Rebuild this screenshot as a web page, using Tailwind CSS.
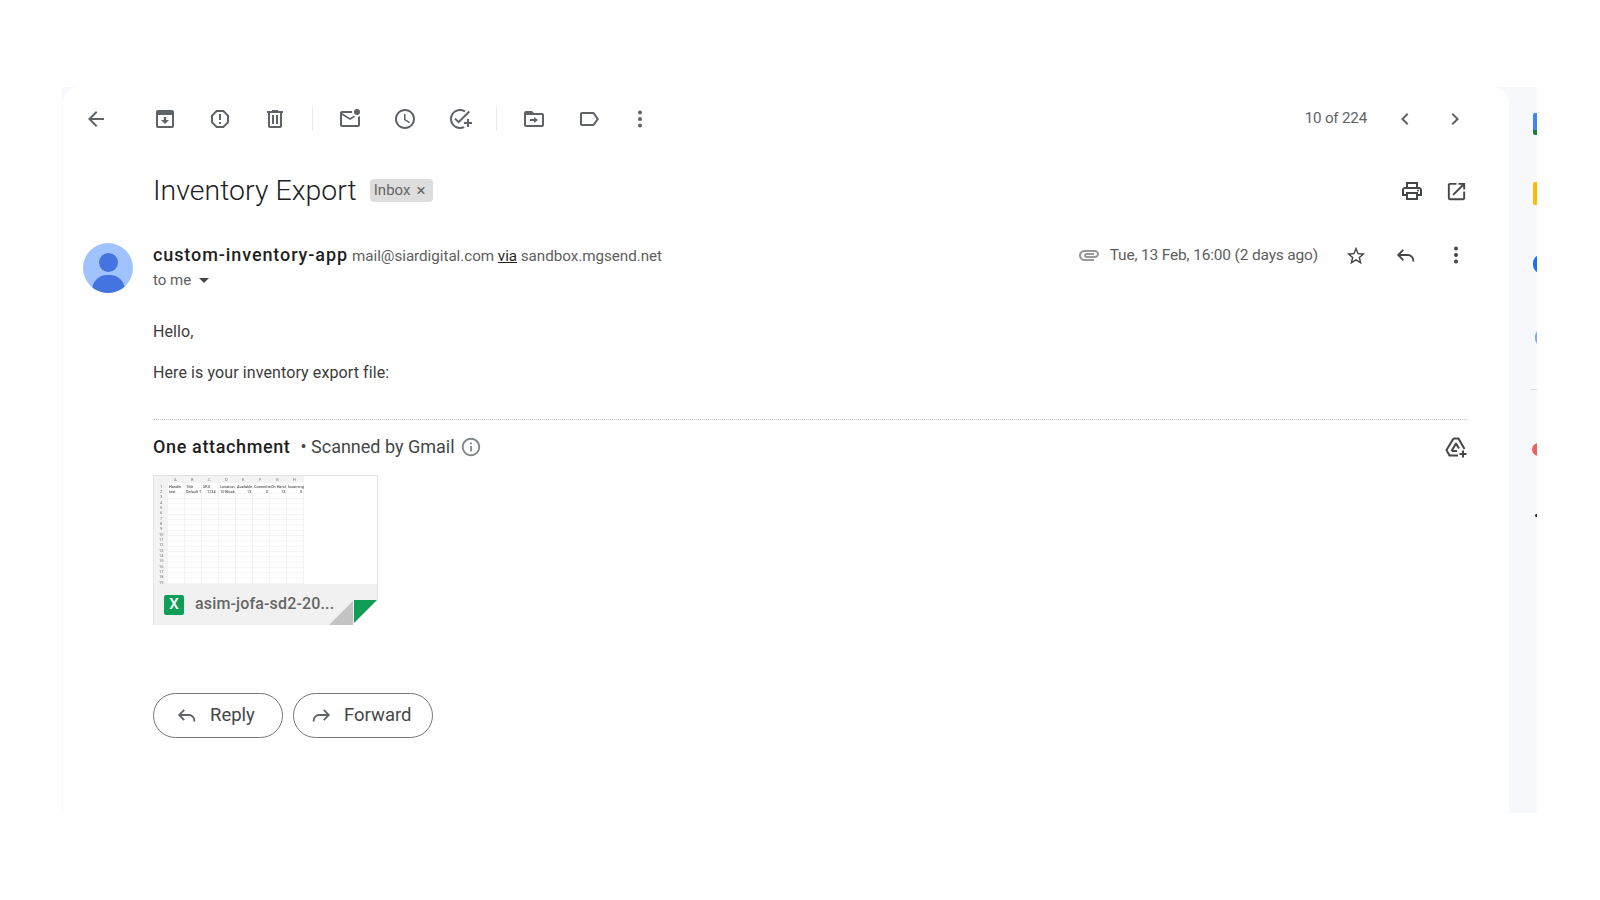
<!DOCTYPE html>
<html lang="en">
<head>
  <meta charset="UTF-8">
  <title>Inventory Export</title>
  <script src="https://cdn.jsdelivr.net/npm/@tailwindcss/browser@4"></script>
</head>
<body class="bg-white h-[900px] overflow-hidden font-['Roboto',sans-serif]">
  <div class="pt-[87px] pl-[62px]">
    <div class="flex w-[1475px] h-[726px] bg-[#f6f8fc]">

      <!-- Mail panel -->
      <div class="w-[1446px] h-full ml-px bg-white rounded-t-[16px]">

        <!-- Toolbar -->
        <div class="flex items-center h-[62px] pt-px text-[#5f6368]">
          <div class="flex justify-center w-[55px] ml-[5px]">
            <svg class="w-[24px] h-[24px] fill-current" viewBox="0 0 24 24"><path d="M20 11H7.830l5.590-5.590L12 4l-8 8 8 8 1.410-1.410L7.830 13H20v-2z"/></svg>
          </div>
          <div class="flex ml-[14px]">
            <div class="flex justify-center w-[55px]">
              <svg class="w-[24px] h-[24px] fill-current" viewBox="0 0 24 24"><path fill-rule="evenodd" d="M5 3h14a2 2 0 0 1 2 2v14a2 2 0 0 1-2 2H5a2 2 0 0 1-2-2V5a2 2 0 0 1 2-2zM5 8v11h14V8z"/><path d="M10.800 10h2.400v3H16l-4 4-4-4h2.800z"/></svg>
            </div>
            <div class="flex justify-center w-[55px]">
              <svg class="w-[24px] h-[24px] fill-current" viewBox="0 0 24 24"><path d="M15.730 3H8.270L3 8.270v7.460L8.270 21h7.460L21 15.730V8.270L15.730 3zM19 14.900L14.900 19H9.100L5 14.900V9.100L9.100 5h5.800L19 9.100v5.800zM11 7h2v6h-2zm0 8h2v2h-2z"/></svg>
            </div>
            <div class="flex justify-center w-[55px]">
              <svg class="w-[24px] h-[24px] fill-current" viewBox="0 0 24 24"><path d="M15 4V3H9v1H4v2h1v13c0 1.100.9 2 2 2h10c1.100 0 2-.9 2-2V6h1V4h-5zm2 15H7V6h10v13zM9 8h2v9H9zm4 0h2v9h-2z"/></svg>
            </div>
          </div>
          <div class="w-px h-[24px] ml-[10px] bg-[#e8eaed]"></div>
          <div class="flex ml-[9.500px]">
            <div class="flex justify-center w-[55px]">
              <svg class="w-[24px] h-[24px] fill-current" viewBox="0 0 24 24"><path d="M22 8.980V18c0 1.100-.9 2-2 2H4c-1.100 0-2-.9-2-2V6c0-1.100.9-2 2-2h10.100c-.06.32-.1.660-.1 1s.04.680.1 1H4l8 5 3.670-2.290c.47.430 1.020.760 1.630.980L12 13 4 8v10h16V9.900c.74-.15 1.420-.48 2-.92z"/><circle cx="19" cy="5" r="3"/></svg>
            </div>
            <div class="flex justify-center w-[55px]">
              <svg class="w-[24px] h-[24px] fill-current" viewBox="0 0 24 24"><path d="M11.990 2C6.470 2 2 6.480 2 12s4.470 10 9.990 10C17.520 22 22 17.520 22 12S17.520 2 11.990 2zM12 20c-4.420 0-8-3.580-8-8s3.580-8 8-8 8 3.580 8 8-3.580 8-8 8zM12.500 7H11v6l5.250 3.150.75-1.230-4.500-2.670z"/></svg>
            </div>
            <div class="flex justify-center w-[55px]">
              <svg class="w-[24px] h-[24px] fill-current" viewBox="0 0 24 24"><path d="M22 5.180L10.590 16.600l-4.240-4.240 1.410-1.410 2.830 2.830 10-10L22 5.180zM12 20c-4.420 0-8-3.580-8-8s3.580-8 8-8c1.580 0 3.040.46 4.280 1.250l1.440-1.440C16.100 2.670 14.130 2 12 2 6.480 2 2 6.480 2 12s4.480 10 10 10c1.730 0 3.360-.44 4.780-1.220l-1.500-1.500c-1 .46-2.110.72-3.280.72zM19 15h-3v2h3v3h2v-3h3v-2h-3v-3h-2v3z"/></svg>
            </div>
          </div>
          <div class="w-px h-[24px] ml-[8px] bg-[#e8eaed]"></div>
          <div class="flex ml-[10px]">
            <div class="flex justify-center w-[55px]">
              <svg class="w-[24px] h-[24px] fill-current" viewBox="0 0 24 24"><path d="M20 6h-8l-2-2H4c-1.100 0-1.990.9-1.990 2L2 18c0 1.100.9 2 2 2h16c1.100 0 2-.9 2-2V8c0-1.100-.9-2-2-2zm0 12H4V8h16v10zm-8-4H8v-2h4v-2l4 3-4 3v-2z"/></svg>
            </div>
            <div class="flex justify-center w-[55px]">
              <svg class="w-[24px] h-[24px] fill-current" viewBox="0 0 24 24"><path d="M17.630 5.840C17.270 5.330 16.670 5 16 5L5 5.010C3.900 5.010 3 5.900 3 7v10c0 1.100.9 1.990 2 1.990L16 19c.67 0 1.270-.33 1.630-.84L22 12l-4.370-6.160zM16 17H5V7h11l3.550 5L16 17z"/></svg>
            </div>
            <div class="flex justify-center w-[46px]">
              <svg class="w-[24px] h-[24px] fill-current" viewBox="0 0 24 24"><circle cx="12" cy="5.500" r="2"/><circle cx="12" cy="12" r="2"/><circle cx="12" cy="18.500" r="2"/></svg>
            </div>
          </div>
          <div class="flex items-center ml-auto pr-[29px]">
            <span class="text-[15.200px] tracking-[-0.2px] text-[#5f6368]">10 of 224</span>
            <div class="flex justify-center w-[50px] ml-[13px]">
              <svg class="w-[24px] h-[24px] fill-current" viewBox="0 0 24 24"><path d="M15.410 7.410L14 6l-6 6 6 6 1.410-1.410L10.830 12z"/></svg>
            </div>
            <div class="flex justify-center w-[50px]">
              <svg class="w-[24px] h-[24px] fill-current" viewBox="0 0 24 24"><path d="M10 6L8.590 7.410 13.170 12l-4.580 4.590L10 18l6-6z"/></svg>
            </div>
          </div>
        </div>

        <!-- Subject -->
        <div class="flex items-center h-[44px] mt-[20px] pl-[90px] pr-[41px]">
          <h1 class="text-[28.400px] font-light tracking-[0.05px] text-[#202124]">Inventory Export</h1>
          <div class="flex items-center h-[23px] w-[63px] pl-[4px] ml-[13px] -mt-[2px] rounded-[4px] bg-[#dddddd] text-[#666666] text-[15px]">
            Inbox <span class="ml-[6px] text-[17px] leading-none">×</span>
          </div>
          <div class="flex items-center gap-[21px] ml-auto text-[#444746]">
            <svg class="w-[24px] h-[24px] fill-current" viewBox="0 0 24 24"><path d="M19 8h-1V3H6v5H5c-1.660 0-3 1.340-3 3v6h4v4h12v-4h4v-6c0-1.660-1.340-3-3-3zM8 5h8v3H8V5zm8 14H8v-4h8v4zm4-4h-2v-2H6v2H4v-4c0-.55.45-1 1-1h14c.55 0 1 .45 1 1v4z"/><circle cx="18" cy="11.500" r="1"/></svg>
            <svg class="w-[23px] h-[23px] fill-current" viewBox="0 0 24 24"><path d="M19 19H5V5h7V3H5c-1.110 0-2 .9-2 2v14c0 1.100.89 2 2 2h14c1.100 0 2-.9 2-2v-7h-2v7zM14 3v2h3.590l-9.830 9.830 1.410 1.410L19 6.410V10h2V3h-7z"/></svg>
          </div>
        </div>

        <!-- Sender -->
        <div class="flex mt-[30px] pl-[20px]">
          <div class="w-[50px] h-[50px] rounded-full overflow-hidden bg-[#a0c3ff] shrink-0">
            <div class="w-[19px] h-[19px] mx-auto mt-[10px] rounded-full bg-[#4374e0]"></div>
            <div class="w-[33px] h-[30px] mx-auto mt-[3px] rounded-full bg-[#4374e0]"></div>
          </div>
          <div class="ml-[20px]">
            <div class="flex items-baseline h-[22px] -mt-[2px]">
              <span class="text-[18px] font-medium tracking-[0.9px] text-[#1f1f1f]">custom-inventory-app</span>
              <span class="ml-[4px] text-[15.200px] tracking-[-0.03px] text-[#5e5e5e]">mail@siardigital.com <span class="underline text-[#1f1f1f]">via</span> sandbox.mgsend.net</span>
            </div>
            <div class="flex items-center h-[22px] mt-[6px] text-[15px] text-[#5e5e5e]">
              to me
              <svg class="w-[10px] h-[6px] ml-[8px] mt-[2px] fill-[#444746]" viewBox="0 0 10 6"><path d="M0 0h10L5 5z"/></svg>
            </div>
          </div>
          <div class="flex items-start ml-auto pr-[28px] text-[#444746]">
            <div class="flex items-center h-[24px] mt-px text-[#5e5e5e] text-[15.500px] tracking-[-0.17px]">
              <svg class="w-[24px] h-[24px] mr-[9px] -mt-[3px] fill-[#999999]" viewBox="0 0 24 24"><path d="M2 12.500C2 9.460 4.460 7 7.500 7H18c2.210 0 4 1.790 4 4s-1.790 4-4 4H9.500C8.120 15 7 13.880 7 12.500S8.120 10 9.500 10H17v2H9.410c-.55 0-.55 1 0 1H18c1.100 0 2-.9 2-2s-.9-2-2-2H7.500C5.570 9 4 10.570 4 12.500S5.570 16 7.500 16H17v2H7.500C4.460 18 2 15.540 2 12.500z"/></svg>
              Tue, 13 Feb, 16:00 (2 days ago)
            </div>
            <div class="flex justify-center w-[50px] ml-[13px] mt-[2px]">
              <svg class="w-[22px] h-[22px] fill-current" viewBox="0 0 24 24"><path d="M22 9.240l-7.190-.62L12 2 9.190 8.630 2 9.240l5.460 4.730L5.820 21 12 17.270 18.180 21l-1.630-7.030L22 9.240zM12 15.400l-3.760 2.270 1-4.280-3.320-2.880 4.380-.38L12 6.100l1.710 4.040 4.380.38-3.320 2.880 1 4.280L12 15.400z"/></svg>
            </div>
            <div class="flex justify-center w-[50px] mt-px">
              <svg class="w-[22px] h-[22px] fill-none stroke-current stroke-2" viewBox="0 0 24 24"><path d="M9 6.500 3.500 12 9 17.500M3.500 12H14a6 6 0 0 1 6 6v1"/></svg>
            </div>
            <div class="flex justify-center w-[50px]">
              <svg class="w-[24px] h-[24px] fill-current" viewBox="0 0 24 24"><circle cx="12" cy="5.500" r="2"/><circle cx="12" cy="12" r="2"/><circle cx="12" cy="18.500" r="2"/></svg>
            </div>
          </div>
        </div>

        <!-- Body -->
        <div class="pl-[90px] pr-[42px]">
          <p class="mt-[27px] text-[16px] leading-[24px] tracking-[0.1px] text-[#3c3c3c]">Hello,</p>
          <p class="mt-[17px] text-[16px] leading-[24px] tracking-[0.1px] text-[#3c3c3c]">Here is your inventory export file:</p>

          <div class="mt-[34px] border-t border-dotted border-[#c4c7c5]"></div>

          <div class="flex items-center h-[24px] mt-[15px]">
            <span class="text-[18px] font-medium tracking-[0.63px] -mt-px text-[#1f1f1f]">One attachment</span>
            <span class="ml-[10px] text-[18px] -mt-px text-[#444746]">• Scanned by Gmail</span>
            <svg class="w-[22px] h-[22px] ml-[5px] fill-[#80868b]" viewBox="0 0 24 24"><path d="M11 7h2v2h-2zm0 4h2v6h-2zm1-9C6.480 2 2 6.480 2 12s4.480 10 10 10 10-4.480 10-10S17.520 2 12 2zm0 18c-4.410 0-8-3.590-8-8s3.590-8 8-8 8 3.590 8 8-3.590 8-8 8z"/></svg>
            <svg class="w-[24px] h-[24px] ml-auto -mr-px fill-none stroke-[#444746] stroke-2" viewBox="0 0 24 24" stroke-linejoin="round"><path d="M9.500 3.500h5l6 10.500M9.500 3.500 2.500 15l3 5.500h8.500M7.500 16l4.500-7.500 3 5M7.500 16H13"/><path d="M19 15.500v7M15.500 19h7"/></svg>
          </div>

          <!-- Attachment card -->
          <div class="relative w-[225px] h-[150px] mt-[16px] border border-[#e3e3e3]">
            <svg class="block w-[223px] h-[108px] blur-[0.4px]" viewBox="0 0 223 108">
              <defs>
                <pattern id="cells" x="14" y="7" width="17" height="5.300" patternUnits="userSpaceOnUse">
                  <path d="M17 0V5.300M0 5.300H17" stroke="#dcdcdc" stroke-width="0.600" fill="none"/>
                </pattern>
              </defs>
              <rect x="0" y="0" width="150" height="7" fill="#f3f3f3"/>
              <rect x="0" y="0" width="14" height="108" fill="#f3f3f3"/>
              <rect x="14" y="7" width="136" height="101" fill="url(#cells)"/>
              <g font-family="Roboto" font-size="4" fill="#777777">
                <text x="20" y="5">A</text><text x="37" y="5">B</text><text x="54" y="5">C</text><text x="71" y="5">D</text><text x="88" y="5">E</text><text x="105" y="5">F</text><text x="122" y="5">G</text><text x="139" y="5">H</text>
                <text x="6" y="11.500">1</text><text x="6" y="16.800">2</text><text x="6" y="22">3</text><text x="6" y="27.500">4</text><text x="6" y="32.800">5</text><text x="6" y="38">6</text><text x="6" y="43.500">7</text><text x="6" y="48.800">8</text><text x="6" y="54">9</text>
                <text x="5" y="59.500">10</text><text x="5" y="64.800">11</text><text x="5" y="70">12</text><text x="5" y="75.500">13</text><text x="5" y="80.800">14</text><text x="5" y="86">15</text><text x="5" y="91.500">16</text><text x="5" y="96.800">17</text><text x="5" y="102">18</text><text x="5" y="107.500">19</text>
              </g>
              <g font-family="Roboto" font-size="3.800" fill="#333333">
                <text x="15" y="11.500">Handle</text><text x="32" y="11.500">Title</text><text x="49" y="11.500">SKU</text><text x="66" y="11.500">Location</text><text x="83" y="11.500">Available</text><text x="100" y="11.500">Committe</text><text x="117" y="11.500">On Hand</text><text x="134" y="11.500">Incoming</text>
                <text x="15" y="16.800">test</text><text x="32" y="16.800">Default T</text><text x="53" y="16.800">1234</text><text x="66" y="16.800">10 Block</text><text x="93" y="16.800">13</text><text x="112" y="16.800">0</text><text x="127" y="16.800">13</text><text x="146" y="16.800">0</text>
              </g>
            </svg>
            <div class="flex items-center h-[41px] pl-[10px] bg-[#f1f1f1]">
              <div class="flex items-center justify-center w-[20px] h-[20px] rounded-[2px] bg-[#0f9d58] text-white text-[15px] font-medium">X</div>
              <span class="ml-[11px] -mt-px text-[16px] font-medium tracking-[0.15px] text-[#666666]">asim-jofa-sd2-20...</span>
            </div>
            <!-- Folded corner -->
            <svg class="absolute -right-px -bottom-px w-[50px] h-[25px]" viewBox="0 0 50 25">
              <path d="M50 0V25H25z" fill="#ffffff"/>
              <path d="M25 1V25H1z" fill="#c4c4c4"/>
              <path d="M26 0H49L26 23z" fill="#0f9d58"/>
            </svg>
          </div>

          <!-- Actions -->
          <div class="flex gap-[10px] mt-[68px]">
            <button class="flex items-center w-[130px] h-[45px] pl-[22px] rounded-full border border-[#747775] text-[#444746] text-[18.500px]">
              <svg class="w-[22px] h-[22px] mr-[12px] -mt-[2px] fill-none stroke-[#5f6368] stroke-2" viewBox="0 0 24 24"><path d="M9 6.500 3.500 12 9 17.500M3.500 12H14a6 6 0 0 1 6 6v1"/></svg>
              Reply
            </button>
            <button class="flex items-center w-[140px] h-[45px] pl-[16px] rounded-full border border-[#747775] text-[#444746] text-[18.500px]">
              <svg class="w-[22px] h-[22px] mr-[12px] -mt-[2px] fill-none stroke-[#5f6368] stroke-2" viewBox="0 0 24 24"><path d="M15 6.500 20.500 12 15 17.500M20.500 12H10a6 6 0 0 0-6 6v1"/></svg>
              Forward
            </button>
          </div>
        </div>
      </div>

      <!-- Side panel, cut off at the right edge -->
      <div class="flex-1 relative overflow-hidden">
        <div class="absolute left-[24px] top-[26px] w-[12px] h-[22px] rounded-[2px] bg-[#4285f4] border-b-[5px] border-[#188038]"></div>
        <div class="absolute left-[24px] top-[95px] w-[12px] h-[23px] rounded-[2px] bg-[#fbbc04]"></div>
        <div class="absolute left-[24px] top-[168px] w-[16px] h-[18px] rounded-full bg-[#1a73e8]"></div>
        <div class="absolute left-[26px] top-[243px] w-[12px] h-[15px] rounded-full bg-[#7baaf7]"></div>
        <div class="absolute left-[22px] top-[302px] w-[8px] h-px bg-[#dadce0]"></div>
        <div class="absolute left-[23px] top-[356px] w-[14px] h-[13px] rounded-full bg-[#ea6161]"></div>
        <div class="absolute left-[26px] top-[427px] w-[3px] h-[3px] rounded-full bg-[#222222]"></div>
      </div>
    </div>
  </div>
</body>
</html>
